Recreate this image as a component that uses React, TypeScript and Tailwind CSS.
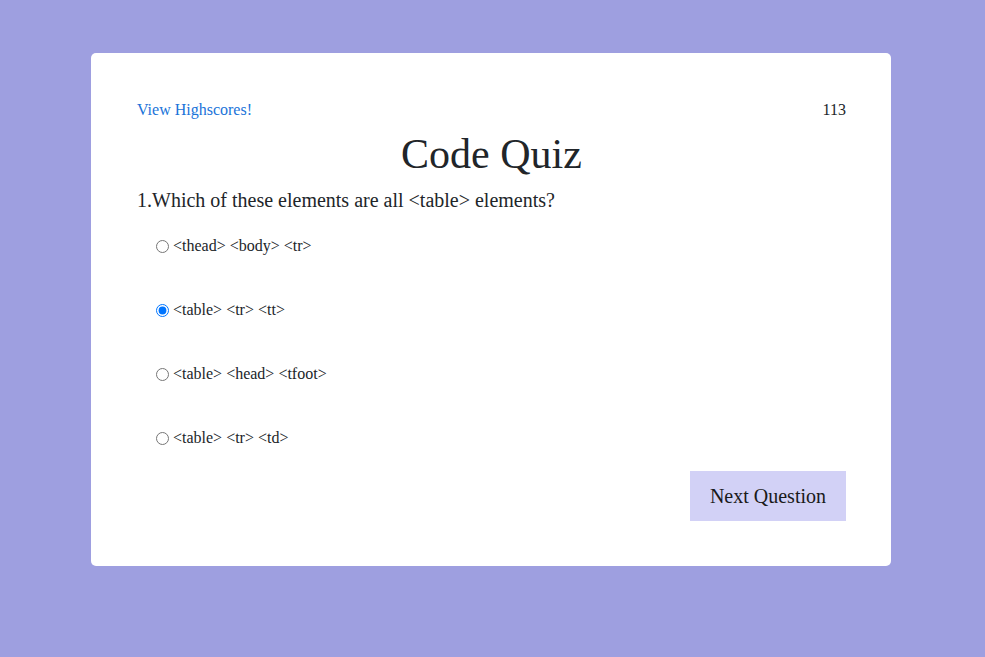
import { useState } from "react";

const choices = [
  "<thead> <body> <tr>",
  "<table> <tr> <tt>",
  "<table> <head> <tfoot>",
  "<table> <tr> <td>",
];

const App = () => {
  const [picked, setPicked] = useState(1);

  return (
    <div className="min-h-[657px] w-full bg-[#9e9fe0] pt-[53px] pl-[91px] font-['Liberation_Serif',serif] text-[#212529]">
      <div className="w-[800px] rounded-[5px] bg-white pl-[46px] pr-[45px] pt-[45px] pb-[45px]">
        <div className="flex items-center justify-between text-[16px] leading-[24px]">
          <a href="#" className="text-[#1a73d9]">
            View Highscores!
          </a>
          <span>113</span>
        </div>

        <h1 className="mt-[8px] text-center text-[42px] leading-[48px]">Code Quiz</h1>

        <p className="mt-[7px] text-[20px] leading-[30px]">
          1.Which of these elements are all &lt;table&gt; elements?
        </p>

        <div className="mt-[19px] flex flex-col gap-[40px]">
          {choices.map((c, i) => (
            <label key={c} className="flex items-center text-[16px] leading-[24px]">
              <input
                type="radio"
                name="answer"
                checked={picked === i}
                onChange={() => setPicked(i)}
                className="ml-[19px] mr-[4px] h-[13px] w-[13px] accent-[#0075ff]"
              />
              {c}
            </label>
          ))}
        </div>

        <div className="mt-[21px] flex justify-end">
          <button className="bg-[#d2d1f6] px-5 py-[10px] text-[20px] leading-[30px] text-[#1a1a1a]">
            Next Question
          </button>
        </div>
      </div>
    </div>
  );
};

export default App;
